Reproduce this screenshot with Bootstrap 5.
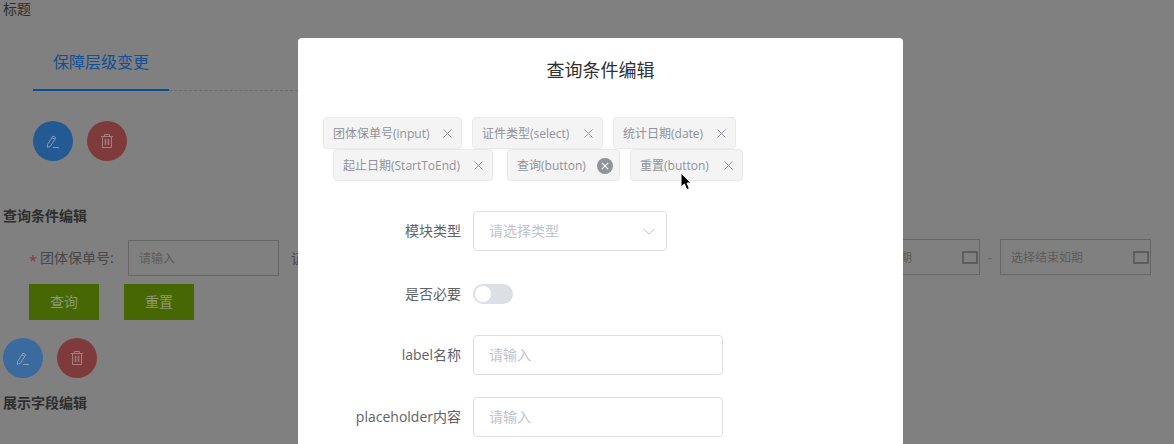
<!DOCTYPE html>
<html lang="zh-CN">
<head>
  <meta charset="UTF-8" />
  <meta name="viewport" content="width=device-width, initial-scale=1" />
  <title>查询条件编辑</title>
  <link href="https://cdn.jsdelivr.net/npm/bootstrap@5.3.0/dist/css/bootstrap.min.css" rel="stylesheet">
  <style>
    html, body { height: 444px; overflow: hidden; }
    body { background: #808080; font-family: "Open Sans", "Noto Sans CJK SC", sans-serif; color: #303030; font-size: 14px; }

    /* dimmed page behind the dialog */
    .page-wrap { width: 1174px; height: 444px; padding-left: 3px; }
    .page-title { line-height: 18px; height: 33px; color: #2e2e2e; }
    .tab-bar { margin-left: 30px; width: 265px; height: 58px; border-bottom: 1px dashed #6c6c6c; }
    .tab-item { width: 136px; height: 58px; line-height: 59px; text-align: center; font-size: 16px; color: #134f95; border-bottom: 2px solid #0d4d96; margin-bottom: -1px; }
    .round-btn { width: 40px; height: 40px; padding: 0; border: 0; border-radius: 50%; }
    .round-btn svg { display: block; }
    .round-blue { background: #245a94; }
    .round-red { background: #7f3b3b; }
    .round-blue-lt { background: #3a6a9e; }
    .top-actions { margin: 30px 0 0 30px; gap: 14px; }
    .low-actions { gap: 14px; margin-top: 18px; }
    .sect-head { font-weight: 700; color: #2e2e2e; line-height: 20px; }
    .head-query { margin-top: 45px; }
    .head-show { margin-top: 15px; }
    .filter-row { width: 1148px; margin-top: 14px; padding-left: 26px; height: 36px; color: #484848; }
    .req-star { color: #8a3a3a; width: 11px; font-size: 15px; line-height: 20px; padding-top: 3px; }
    .filter-label { width: 88px; padding-bottom: 1px; }
    .dim-input { width: 151px; height: 36px; border: 1px solid #666; padding-left: 10px; font-size: 12px; color: #5c5c5c; line-height: 35px; }
    .dim-date { margin-top: -2px; }
    .cal-box { width: 16px; height: 13px; border: 2px solid #5e5e5e; margin-right: 1px; }
    .date-dash { width: 20px; text-align: center; color: #666; }
    .dim-btn { width: 70px; height: 36px; padding: 0 0 1px; border: 0; border-radius: 0; background: #476705; color: #8b9a70; font-size: 14px; }
    .btn-row { gap: 25px; margin: 8px 0 0 26px; }

    /* dialog */
    .dialog-box { position: absolute; left: 298px; top: 38px; width: 605px; height: 460px; background: #fff; border-radius: 4px; border: 0; }
    .dialog-title { font-size: 18px; line-height: 24px; color: #303133; text-align: center; margin-top: 20px; height: 59px; }
    .chip-row { height: 32px; gap: 10px; }
    .chip-row-a { margin-left: 25px; }
    .chip-row-b { margin-left: 35px; }
    .chip-tag { height: 32px; padding: 1px 9px 0; border: 1px solid #e9e9eb; border-radius: 4px; background: #f4f4f5; color: #909399; font-size: 12px; line-height: 30px; white-space: nowrap; }
    .chip-x { color: #909399; margin-left: auto; }
    .chip-x svg { display: block; }
    .chip-x-on { margin-right: -3px; }
    .gap-wide { margin-left: 4px; }
    .chip-w1 { width: 139px; }
    .chip-w2 { width: 131px; }
    .chip-w3 { width: 123px; }
    .chip-w4 { width: 160px; }
    .chip-w5 { width: 113px; }
    .chip-w6 { width: 113px; }
    .field-label { width: 163px; text-align: right; color: #606266; font-size: 14px; margin-right: 12px; padding-bottom: 2px; white-space: nowrap; }
    .field-input, .field-input:focus { height: 40px; border: 1px solid #dcdfe6; border-radius: 4px; padding: 0 15px 2px; font-size: 14px; color: #606266; box-shadow: none; width: 250px; }
    .field-input::placeholder { color: #c0c4cc; opacity: 1; }
    .field-select { width: 194px; height: 40px; border: 1px solid #dcdfe6; border-radius: 4px; padding: 0 11px 0 15px; color: #c0c4cc; font-size: 14px; }
    .select-text { padding-bottom: 2px; }
    .toggle-off { width: 40px; height: 20px; background: #dcdfe6; border-radius: 10px; padding: 2px; }
    .toggle-off span { display: block; width: 16px; height: 16px; border-radius: 50%; background: #fff; }
    .row-type { margin-top: 30px; }
    .row-need { margin-top: 33px; height: 20px; }
    .row-label { margin-top: 31px; }
    .row-holder { margin-top: 22px; }
    .mouse-arrow { position: absolute; left: 680px; top: 172px; }
  </style>
</head>
<body>

  <!-- page behind the mask -->
  <div class="page-wrap">
    <div class="page-title">标题</div>

    <div class="tab-bar d-flex">
      <div class="tab-item">保障层级变更</div>
    </div>

    <div class="top-actions d-flex">
      <button class="round-btn round-blue d-flex align-items-center justify-content-center" aria-label="编辑">
        <svg width="14" height="16" viewBox="0 0 14 16" fill="none" stroke="#8a9bb0" stroke-width="1"><path d="M1.5 11.5 7 3l2.8 1.8-5.5 8.6-3 .9z"/><path d="M6 4.6l2.8 1.8"/><path d="M7 14.5h6"/></svg>
      </button>
      <button class="round-btn round-red d-flex align-items-center justify-content-center" aria-label="删除">
        <svg width="14" height="16" viewBox="0 0 14 16" fill="none" stroke="#a57f7f" stroke-width="1"><path d="M1 3.5h12M4.5 3.5V1.5h5v2M2.5 3.5v11h9v-11"/><path d="M5.5 6v6M8.5 6v6" stroke-width="1.4"/></svg>
      </button>
    </div>

    <div class="sect-head head-query">查询条件编辑</div>

    <div class="filter-row d-flex align-items-center">
      <span class="req-star">*</span>
      <span class="filter-label">团体保单号:</span>
      <div class="dim-input">请输入</div>
      <span class="ms-2 ps-1">证件类型:</span>
      <div class="ms-auto d-flex align-items-center dim-date">
        <div class="dim-input d-flex align-items-center justify-content-between pe-0"><span>选择开始如期</span><span class="cal-box"></span></div>
        <span class="date-dash">-</span>
        <div class="dim-input d-flex align-items-center justify-content-between pe-0"><span>选择结束如期</span><span class="cal-box"></span></div>
      </div>
    </div>

    <div class="btn-row d-flex">
      <button class="dim-btn">查询</button>
      <button class="dim-btn">重置</button>
    </div>

    <div class="low-actions d-flex">
      <button class="round-btn round-blue-lt d-flex align-items-center justify-content-center" aria-label="编辑">
        <svg width="14" height="16" viewBox="0 0 14 16" fill="none" stroke="#8f9fb2" stroke-width="1"><path d="M1.5 11.5 7 3l2.8 1.8-5.5 8.6-3 .9z"/><path d="M6 4.6l2.8 1.8"/><path d="M7 14.5h6"/></svg>
      </button>
      <button class="round-btn round-red d-flex align-items-center justify-content-center" aria-label="删除">
        <svg width="14" height="16" viewBox="0 0 14 16" fill="none" stroke="#a57f7f" stroke-width="1"><path d="M1 3.5h12M4.5 3.5V1.5h5v2M2.5 3.5v11h9v-11"/><path d="M5.5 6v6M8.5 6v6" stroke-width="1.4"/></svg>
      </button>
    </div>

    <div class="sect-head head-show">展示字段编辑</div>
  </div>

  <!-- dialog -->
  <div class="dialog-box card">
    <div class="dialog-title">查询条件编辑</div>

    <div class="chip-row chip-row-a d-flex">
      <span class="chip-tag chip-w1 d-flex align-items-center">团体保单号(input)<span class="chip-x"><svg width="9" height="9" viewBox="0 0 9 9" stroke="#909399"><path d="M.5.5l8 8M8.5.5l-8 8"/></svg></span></span>
      <span class="chip-tag chip-w2 d-flex align-items-center">证件类型(select)<span class="chip-x"><svg width="9" height="9" viewBox="0 0 9 9" stroke="#909399"><path d="M.5.5l8 8M8.5.5l-8 8"/></svg></span></span>
      <span class="chip-tag chip-w3 d-flex align-items-center">统计日期(date)<span class="chip-x"><svg width="9" height="9" viewBox="0 0 9 9" stroke="#909399"><path d="M.5.5l8 8M8.5.5l-8 8"/></svg></span></span>
    </div>
    <div class="chip-row chip-row-b d-flex">
      <span class="chip-tag chip-w4 d-flex align-items-center">起止日期(StartToEnd)<span class="chip-x"><svg width="9" height="9" viewBox="0 0 9 9" stroke="#909399"><path d="M.5.5l8 8M8.5.5l-8 8"/></svg></span></span>
      <span class="chip-tag chip-w5 d-flex align-items-center gap-wide">查询(button)<span class="chip-x chip-x-on"><svg width="16" height="16" viewBox="0 0 16 16"><circle cx="8" cy="8" r="8" fill="#909399"/><path d="M4.8 4.8l6.4 6.4M11.2 4.8l-6.4 6.4" stroke="#fff" stroke-width="1.2"/></svg></span></span>
      <span class="chip-tag chip-w6 d-flex align-items-center">重置(button)<span class="chip-x"><svg width="9" height="9" viewBox="0 0 9 9" stroke="#909399"><path d="M.5.5l8 8M8.5.5l-8 8"/></svg></span></span>
    </div>

    <div class="row-type d-flex align-items-center">
      <label class="field-label">模块类型</label>
      <div class="field-select d-flex align-items-center justify-content-between">
        <span class="select-text">请选择类型</span>
        <svg width="12" height="7" viewBox="0 0 12 7" fill="none" stroke="#c0c4cc"><path d="M.5.8 6 6l5.5-5.2"/></svg>
      </div>
    </div>
    <div class="row-need d-flex align-items-center">
      <label class="field-label">是否必要</label>
      <div class="toggle-off"><span></span></div>
    </div>
    <div class="row-label d-flex align-items-center">
      <label class="field-label">label名称</label>
      <input class="form-control field-input" type="text" placeholder="请输入">
    </div>
    <div class="row-holder d-flex align-items-center">
      <label class="field-label">placeholder内容</label>
      <input class="form-control field-input" type="text" placeholder="请输入">
    </div>
  </div>

  <!-- mouse pointer -->
  <svg class="mouse-arrow" width="13" height="19" viewBox="0 0 13 19"><path d="M1 1v14l3.4-3 2.4 5.6 2.6-1.1-2.4-5.4H11z" fill="#000" stroke="#fff" stroke-width="1"/></svg>

  <script src="https://cdn.jsdelivr.net/npm/bootstrap@5.3.0/dist/js/bootstrap.bundle.min.js"></script>
</body>
</html>
